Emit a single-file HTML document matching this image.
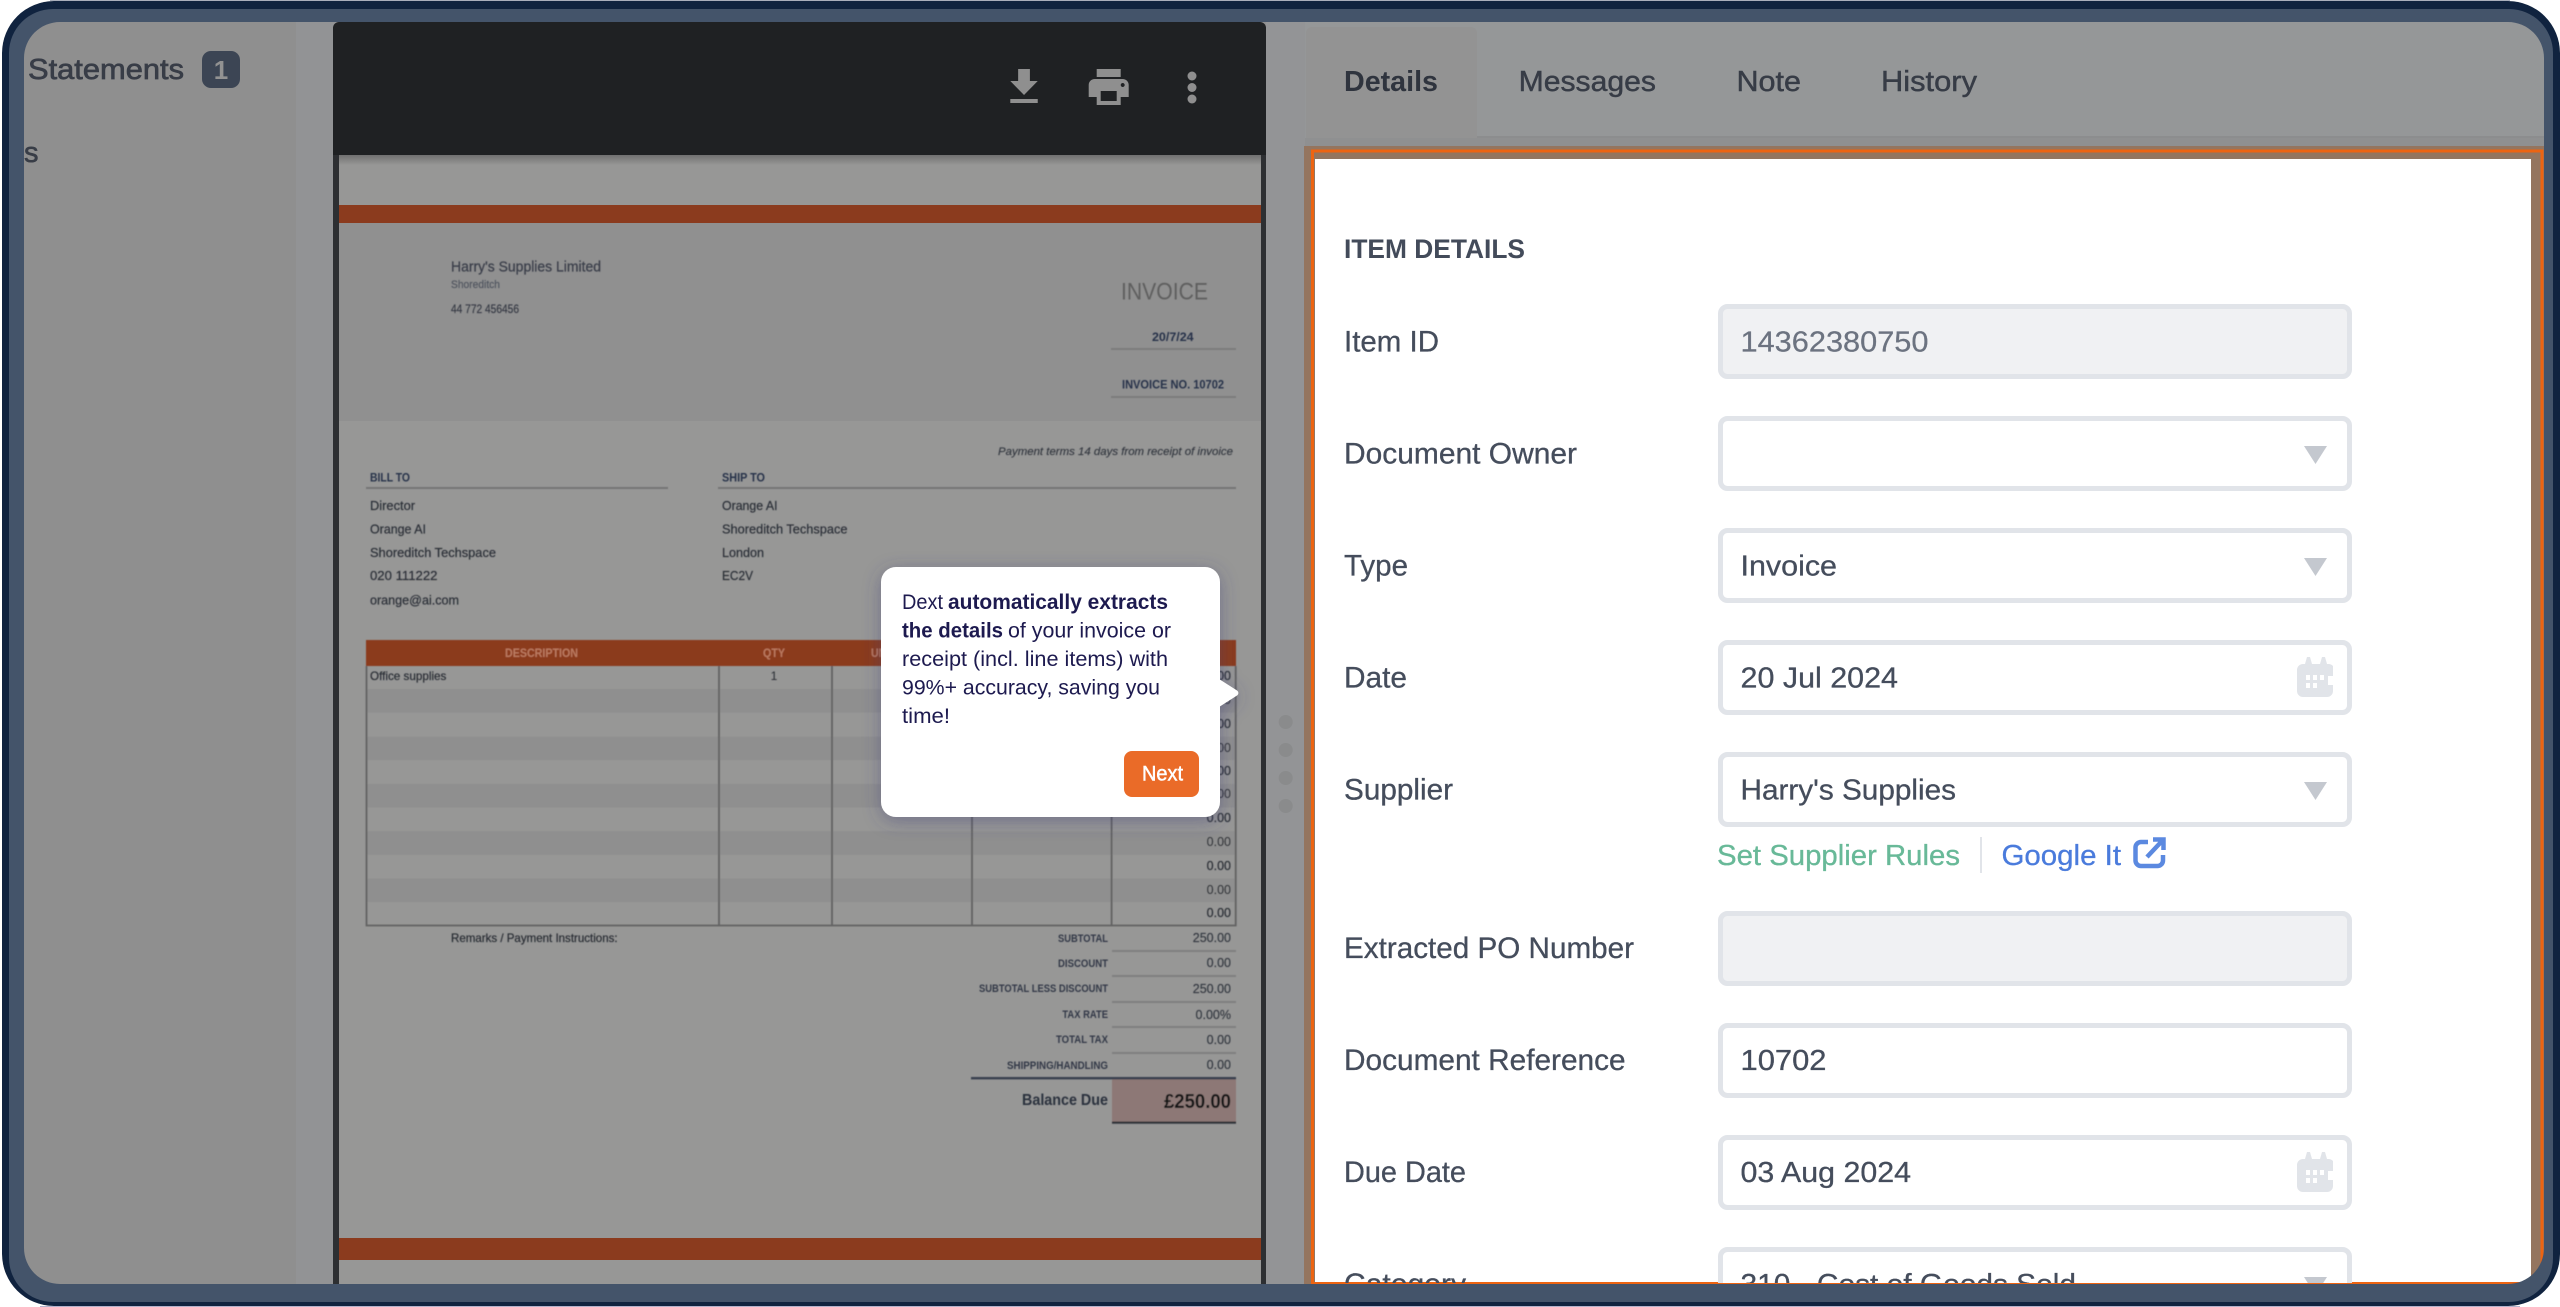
<!DOCTYPE html>
<html lang="en"><head><meta charset="utf-8"><title>Dext item details</title>
<style>
html,body{margin:0;padding:0;background:#fff;width:2560px;height:1307px;overflow:hidden}
svg{display:block}
text{font-family:"Liberation Sans",Arial,sans-serif;white-space:pre}
</style></head><body>
<svg xmlns="http://www.w3.org/2000/svg" width="2560" height="1307" viewBox="0 0 2560 1307">
<defs>
<filter id="b" x="-2%" y="-2%" width="104%" height="104%"><feGaussianBlur stdDeviation="0.4"/></filter>
<filter id="s" x="-15%" y="-15%" width="130%" height="130%"><feDropShadow dx="0" dy="4" stdDeviation="9" flood-color="#3f3f78" flood-opacity=".45"/></filter>
<linearGradient id="tg" x1="0" y1="0" x2="0" y2="1"><stop offset="0" stop-color="#707070"/><stop offset="1" stop-color="#979796"/></linearGradient>
<clipPath id="fc"><rect x="1315" y="159" width="1216" height="1124"/></clipPath>
</defs>

<!-- base panels -->
<rect width="2560" height="1307" fill="#8f8f8f"/>
<rect x="296" y="0" width="40" height="1307" fill="#929395"/>
<rect x="1266" y="0" width="1294" height="1307" fill="#939496"/>
<rect x="1305" y="0" width="1255" height="138" fill="#959798"/>
<rect x="1305" y="138" width="1255" height="8" fill="#8f9091"/>
<path d="M1306 138V33a6 6 0 0 1 6-6H1471a6 6 0 0 1 6 6V138Z" fill="#939393"/>
<rect x="1477" y="136" width="1080" height="2" fill="#8c8d8e"/>

<!-- left nav -->
<text x="28" y="79" font-size="28.5" fill="#383d47" stroke="#383d47" stroke-width=".7" textLength="156" lengthAdjust="spacingAndGlyphs">Statements</text>
<rect x="202" y="51" width="38" height="37" rx="9" fill="#3c4554"/>
<text x="221" y="79" font-size="26" font-weight="700" fill="#929292" text-anchor="middle">1</text>
<text x="24" y="162" font-size="29" fill="#383d47" stroke="#383d47" stroke-width=".6">s</text>

<!-- doc viewer -->
<rect x="333" y="150" width="933" height="1140" fill="#2d2f32"/>
<rect x="339" y="155" width="922" height="1135" fill="#979796"/>
<rect x="339" y="155" width="922" height="10" fill="url(#tg)"/>
<rect x="339" y="223" width="922" height="198" fill="#909090"/>
<rect x="339" y="205" width="922" height="18" fill="#8b3b1e"/>
<rect x="339" y="1238" width="922" height="22" fill="#8b3b1e"/>
<path d="M333 155V28a6 6 0 0 1 6-6H1260a6 6 0 0 1 6 6V155Z" fill="#1f2123"/>

<!-- toolbar icons -->
<g fill="#8f8f8f">
<path transform="translate(1000.5 63) scale(1.96 2)" d="M19 9h-4V3H9v6H5l7 7 7-7zM5 18v2h14v-2H5z"/>
<path transform="translate(1084.7 63) scale(2)" d="M19 8H5c-1.66 0-3 1.34-3 3v6h4v4h12v-4h4v-6c0-1.66-1.34-3-3-3zm-3 11H8v-5h8v5zm3-7c-.55 0-1-.45-1-1s.45-1 1-1 1 .45 1 1-.45 1-1 1zm-1-9H6v4h12V3z"/>
<ellipse cx="1192" cy="76" rx="4.5" ry="4.5"/><ellipse cx="1192" cy="87.5" rx="4.5" ry="4.5"/><ellipse cx="1192" cy="99" rx="4.5" ry="4.5"/>
</g>

<!-- invoice content -->
<g filter="url(#b)">
<rect x="367" y="689" width="869" height="23.6" fill="#8f8f8f"/>
<rect x="367" y="736.6" width="869" height="23.6" fill="#8f8f8f"/>
<rect x="367" y="783.9" width="869" height="23.6" fill="#8f8f8f"/>
<rect x="367" y="831.2" width="869" height="23.6" fill="#8f8f8f"/>
<rect x="367" y="878.5" width="869" height="23.6" fill="#8f8f8f"/>

<text x="451" y="271.5" font-size="14.5" fill="#3a3e49" stroke="#3a3e49" stroke-width=".25" textLength="150" lengthAdjust="spacingAndGlyphs">Harry's Supplies Limited</text>
<text x="451" y="288" font-size="11" fill="#50555f" stroke="#50555f" stroke-width=".2" textLength="49" lengthAdjust="spacingAndGlyphs">Shoreditch</text>
<text x="451" y="313" font-size="11.5" fill="#363a44" stroke="#363a44" stroke-width=".2" textLength="68" lengthAdjust="spacingAndGlyphs">44 772 456456</text>
<text x="1121" y="299.5" font-size="24" fill="#5f5f5f" textLength="87" lengthAdjust="spacingAndGlyphs">INVOICE</text>
<text x="1152" y="341" font-size="12" font-weight="700" fill="#26324a" textLength="41.6" lengthAdjust="spacingAndGlyphs">20/7/24</text>
<rect x="1111" y="348" width="125" height="2" fill="#7b7b7b"/>
<text x="1122" y="388.5" font-size="12" font-weight="700" fill="#26324a" textLength="102" lengthAdjust="spacingAndGlyphs">INVOICE NO. 10702</text>
<rect x="1111" y="396" width="125" height="2" fill="#7b7b7b"/>
<text x="998" y="455" font-size="11" font-style="italic" fill="#33373f" stroke="#33373f" stroke-width=".15" textLength="235" lengthAdjust="spacingAndGlyphs">Payment terms 14 days from receipt of invoice</text>

<text x="370" y="481.5" font-size="11.5" font-weight="700" fill="#26324a" textLength="40" lengthAdjust="spacingAndGlyphs">BILL TO</text>
<rect x="366" y="487" width="302" height="2" fill="#757575"/>
<text x="722" y="481.5" font-size="11.5" font-weight="700" fill="#26324a" textLength="43" lengthAdjust="spacingAndGlyphs">SHIP TO</text>
<rect x="718" y="487" width="518" height="2" fill="#757575"/>
<g font-size="13" fill="#2b2f37" stroke="#2b2f37" stroke-width=".2">
<text x="370" y="510" textLength="45" lengthAdjust="spacingAndGlyphs">Director</text>
<text x="370" y="533.5" textLength="56" lengthAdjust="spacingAndGlyphs">Orange AI</text>
<text x="370" y="557" textLength="126" lengthAdjust="spacingAndGlyphs">Shoreditch Techspace</text>
<text x="370" y="580" textLength="67.5" lengthAdjust="spacingAndGlyphs">020 111222</text>
<text x="370" y="604.5" textLength="89" lengthAdjust="spacingAndGlyphs">orange@ai.com</text>
<text x="722" y="510" textLength="55.5" lengthAdjust="spacingAndGlyphs">Orange AI</text>
<text x="722" y="533.5" textLength="125.5" lengthAdjust="spacingAndGlyphs">Shoreditch Techspace</text>
<text x="722" y="557" textLength="42" lengthAdjust="spacingAndGlyphs">London</text>
<text x="722" y="580" textLength="31" lengthAdjust="spacingAndGlyphs">EC2V</text>
</g>

<rect x="366" y="640" width="870" height="26" fill="#8b3b1e"/>
<g font-size="11.5" font-weight="700" fill="#bb7a60">
<text x="505" y="657" textLength="73" lengthAdjust="spacingAndGlyphs">DESCRIPTION</text>
<text x="763" y="657" textLength="22" lengthAdjust="spacingAndGlyphs">QTY</text>
<text x="871" y="657" textLength="60" lengthAdjust="spacingAndGlyphs">UNIT PRICE</text>
</g>
<g stroke="#626262" stroke-width="1.8" fill="none">
<path d="M366.5 666V925.5H1235.7V666M719 666V925M832 666V925M972 666V925M1111.6 666V925"/>
</g>
<text x="370" y="680" font-size="12" fill="#282c33" stroke="#282c33" stroke-width=".2" textLength="76.4" lengthAdjust="spacingAndGlyphs">Office supplies</text>
<text x="774" y="680" font-size="12" fill="#282c33" text-anchor="middle">1</text>
<g font-size="12.5" fill="#282c33" stroke="#282c33" stroke-width=".15" text-anchor="end">
<text x="1231" y="680">250.00</text>
<text x="1231" y="704">0.00</text><text x="1231" y="728">0.00</text><text x="1231" y="752">0.00</text>
<text x="1231" y="775">0.00</text><text x="1231" y="798">0.00</text><text x="1231" y="822">0.00</text>
<text x="1231" y="846">0.00</text><text x="1231" y="870">0.00</text><text x="1231" y="894">0.00</text><text x="1231" y="917">0.00</text>
</g>

<text x="451" y="942" font-size="12" fill="#282c33" stroke="#282c33" stroke-width=".2" textLength="166.6" lengthAdjust="spacingAndGlyphs">Remarks / Payment Instructions:</text>
<g font-size="11" font-weight="700" fill="#333947">
<text x="1058" y="942" textLength="50" lengthAdjust="spacingAndGlyphs">SUBTOTAL</text>
<text x="1058" y="967" textLength="50" lengthAdjust="spacingAndGlyphs">DISCOUNT</text>
<text x="979" y="992" textLength="129" lengthAdjust="spacingAndGlyphs">SUBTOTAL LESS DISCOUNT</text>
<text x="1062.4" y="1018" textLength="45.6" lengthAdjust="spacingAndGlyphs">TAX RATE</text>
<text x="1056" y="1043" textLength="52" lengthAdjust="spacingAndGlyphs">TOTAL TAX</text>
<text x="1007" y="1069" textLength="101" lengthAdjust="spacingAndGlyphs">SHIPPING/HANDLING</text>
</g>
<g font-size="12.5" fill="#33373f" stroke="#33373f" stroke-width=".15" text-anchor="end">
<text x="1231" y="942">250.00</text><text x="1231" y="967">0.00</text><text x="1231" y="993">250.00</text>
<text x="1231" y="1019">0.00%</text><text x="1231" y="1044">0.00</text><text x="1231" y="1069">0.00</text>
</g>
<g fill="#7f7f7f">
<rect x="1112" y="950" width="124" height="2"/><rect x="1112" y="975" width="124" height="2"/>
<rect x="1112" y="1001" width="124" height="2"/><rect x="1112" y="1026" width="124" height="2"/><rect x="1112" y="1052" width="124" height="2"/>
</g>
<rect x="1112" y="1078" width="124" height="44" fill="#8d7876"/>
<rect x="971" y="1077" width="265" height="2.4" fill="#39414f"/>
<rect x="1112" y="1121.5" width="124" height="2.2" fill="#2f3138"/>
<text x="1022" y="1105" font-size="15.5" font-weight="700" fill="#2b313d" textLength="86" lengthAdjust="spacingAndGlyphs">Balance Due</text>
<text x="1164" y="1108" font-size="20.5" font-weight="700" fill="#141619" textLength="67" lengthAdjust="spacingAndGlyphs">£250.00</text>
</g>

<!-- splitter dots -->
<g fill="#8a8b8c"><circle cx="1285.7" cy="722" r="7"/><circle cx="1285.7" cy="750" r="7"/><circle cx="1285.7" cy="778" r="7"/><circle cx="1285.7" cy="806" r="7"/></g>

<!-- tabs -->
<text x="1344" y="91" font-size="29" font-weight="700" fill="#2f343e" textLength="94" lengthAdjust="spacingAndGlyphs">Details</text>
<g font-size="29" fill="#373c46" stroke="#373c46" stroke-width=".45">
<text x="1518.6" y="91" textLength="137.4" lengthAdjust="spacingAndGlyphs">Messages</text>
<text x="1736.5" y="91" textLength="64.5" lengthAdjust="spacingAndGlyphs">Note</text>
<text x="1881" y="91" textLength="96" lengthAdjust="spacingAndGlyphs">History</text>
</g>

<!-- highlighted details panel -->
<rect x="1304" y="146" width="1240" height="1138" fill="#94755f"/>
<rect x="1315" y="159" width="1216" height="1124" fill="#fff"/>
<rect x="1312.5" y="151" width="1229.5" height="1132.5" fill="none" stroke="#ed6412" stroke-width="3"/>

<g clip-path="url(#fc)">
<text x="1344" y="258.2" font-size="26.5" font-weight="700" fill="#434b5a" textLength="181" lengthAdjust="spacingAndGlyphs">ITEM DETAILS</text>
<g font-size="29.5" fill="#454d5c" stroke="#454d5c" stroke-width=".3">
<text x="1344" y="351.5" textLength="95" lengthAdjust="spacingAndGlyphs">Item ID</text>
<text x="1344" y="463.5" textLength="233" lengthAdjust="spacingAndGlyphs">Document Owner</text>
<text x="1344" y="575.5" textLength="64" lengthAdjust="spacingAndGlyphs">Type</text>
<text x="1344" y="687.5" textLength="63" lengthAdjust="spacingAndGlyphs">Date</text>
<text x="1344" y="799.5" textLength="109" lengthAdjust="spacingAndGlyphs">Supplier</text>
<text x="1344" y="958" textLength="290" lengthAdjust="spacingAndGlyphs">Extracted PO Number</text>
<text x="1344" y="1070" textLength="281.6" lengthAdjust="spacingAndGlyphs">Document Reference</text>
<text x="1344" y="1182" textLength="122" lengthAdjust="spacingAndGlyphs">Due Date</text>
<text x="1344" y="1294" textLength="122" lengthAdjust="spacingAndGlyphs">Category</text>
</g>
<g fill="#fff" stroke="#e1e4e9" stroke-width="5">
<rect x="1720.5" y="306.5" width="629" height="70" rx="7" fill="#f0f1f3"/>
<rect x="1720.5" y="418.5" width="629" height="70" rx="7"/>
<rect x="1720.5" y="530.5" width="629" height="70" rx="7"/>
<rect x="1720.5" y="642.5" width="629" height="70" rx="7"/>
<rect x="1720.5" y="754.5" width="629" height="70" rx="7"/>
<rect x="1720.5" y="913.5" width="629" height="70" rx="7" fill="#f0f1f3"/>
<rect x="1720.5" y="1025.5" width="629" height="70" rx="7"/>
<rect x="1720.5" y="1137.5" width="629" height="70" rx="7"/>
<rect x="1720.5" y="1249.5" width="629" height="70" rx="7"/>
</g>
<text x="1740.5" y="351.5" font-size="29" fill="#6c7380" stroke="#6c7380" stroke-width=".25" textLength="188" lengthAdjust="spacingAndGlyphs">14362380750</text>
<g font-size="29" fill="#454d5c" stroke="#454d5c" stroke-width=".3">
<text x="1740.5" y="575.5" textLength="96.5" lengthAdjust="spacingAndGlyphs">Invoice</text>
<text x="1740.5" y="687.5" textLength="157.5" lengthAdjust="spacingAndGlyphs">20 Jul 2024</text>
<text x="1740.5" y="799.5" textLength="215.5" lengthAdjust="spacingAndGlyphs">Harry's Supplies</text>
<text x="1740.5" y="1070" textLength="86" lengthAdjust="spacingAndGlyphs">10702</text>
<text x="1740.5" y="1182" textLength="170.5" lengthAdjust="spacingAndGlyphs">03 Aug 2024</text>
<text x="1740.5" y="1294" textLength="335.5" lengthAdjust="spacingAndGlyphs">310 - Cost of Goods Sold</text>
</g>
<g fill="#c4c8cf">
<path d="M2304 446H2327L2315.500 464Z"/><path d="M2304 558H2327L2315.500 576Z"/><path d="M2304 782H2327L2315.500 800Z"/><path d="M2304 1277H2327L2315.500 1295Z"/>
</g>
<!-- calendars -->
<g>
<path d="M2297 670a6 6 0 0 1 6-6h2l2-7h3l2 7h8l2-7h3l2 7h2a6 6 0 0 1 4 2V676h-5v9h5v6a6 6 0 0 1-6 6H2303a6 6 0 0 1-6-6Z" fill="#e1e4e9"/>
<g fill="#fff"><rect x="2306" y="675" width="4" height="5"/><rect x="2313" y="675" width="4" height="5"/><rect x="2320" y="675" width="4" height="5"/><rect x="2306" y="683" width="4" height="5"/><rect x="2313" y="683" width="4" height="5"/></g>
</g>
<g transform="translate(0 495)">
<path d="M2297 670a6 6 0 0 1 6-6h2l2-7h3l2 7h8l2-7h3l2 7h2a6 6 0 0 1 4 2V676h-5v9h5v6a6 6 0 0 1-6 6H2303a6 6 0 0 1-6-6Z" fill="#e1e4e9"/>
<g fill="#fff"><rect x="2306" y="675" width="4" height="5"/><rect x="2313" y="675" width="4" height="5"/><rect x="2320" y="675" width="4" height="5"/><rect x="2306" y="683" width="4" height="5"/><rect x="2313" y="683" width="4" height="5"/></g>
</g>
<!-- links -->
<text x="1717" y="865" font-size="29" fill="#68b998" stroke="#68b998" stroke-width=".3" textLength="243" lengthAdjust="spacingAndGlyphs">Set Supplier Rules</text>
<rect x="1980" y="837" width="2" height="36" fill="#e1e4e9"/>
<text x="2001.500" y="865" font-size="29" fill="#4a7bdc" stroke="#4a7bdc" stroke-width=".3" textLength="119.500" lengthAdjust="spacingAndGlyphs">Google It</text>
<g fill="none" stroke="#5b89e0" stroke-width="4.500">
<path d="M2148 842H2141a5.500 5.500 0 0 0-5.500 5.500V860.500a5.500 5.500 0 0 0 5.500 5.500H2157.500a5.500 5.500 0 0 0 5.500-5.500V855"/>
<path d="M2147 857L2162 841M2153 839.500H2163.500V850"/>
</g>
</g>

<!-- tooltip -->
<g filter="url(#s)">
<rect x="881" y="567" width="339" height="250" rx="15" fill="#fff"/>
<path d="M1219 679L1237 690.500a3 3 0 0 1 0 5L1219 707Z" fill="#fff"/>
</g>
<g font-size="21" fill="#1d1a4f">
<text x="902" y="609" textLength="41" lengthAdjust="spacingAndGlyphs">Dext</text>
<text x="948" y="609" font-weight="700" textLength="220" lengthAdjust="spacingAndGlyphs">automatically extracts</text>
<text x="902" y="637.500" font-weight="700" textLength="101" lengthAdjust="spacingAndGlyphs">the details</text>
<text x="1008" y="637.500" textLength="163" lengthAdjust="spacingAndGlyphs">of your invoice or</text>
<text x="902" y="666" textLength="266" lengthAdjust="spacingAndGlyphs">receipt (incl. line items) with</text>
<text x="902" y="694.500" textLength="258" lengthAdjust="spacingAndGlyphs">99%+ accuracy, saving you</text>
<text x="902" y="723" textLength="48" lengthAdjust="spacingAndGlyphs">time!</text>
</g>
<rect x="1124" y="751" width="75" height="46" rx="8" fill="#ea6b28"/>
<text x="1142" y="780.500" font-size="21.500" fill="#fff" stroke="#fff" stroke-width=".5" textLength="41" lengthAdjust="spacingAndGlyphs">Next</text>

<!-- device frame -->
<path fill-rule="evenodd" fill="#44546a" d="M9 9H2553V1302H9ZM60 22H2508A36 36 0 0 1 2544 58V1248A36 36 0 0 1 2508 1284H60A36 36 0 0 1 24 1248V58A36 36 0 0 1 60 22Z"/>
<path fill-rule="evenodd" fill="#10233f" d="M54 1H2508A52 52 0 0 1 2560 53V1254A52 52 0 0 1 2508 1306H54A52 52 0 0 1 2 1254V53A52 52 0 0 1 54 1ZM53 9A44 44 0 0 0 9 53V1258A44 44 0 0 0 53 1302H2509A44 44 0 0 0 2553 1258V53A44 44 0 0 0 2509 9Z"/>
<path fill-rule="evenodd" fill="#fff" d="M0 0H2560V1307H0ZM54 1A52 52 0 0 0 2 53V1254A52 52 0 0 0 54 1306H2508A52 52 0 0 0 2560 1254V53A52 52 0 0 0 2508 1Z"/>
<rect x="40" y="1306" width="2480" height="1" fill="#b3b2cc"/>
<rect x="50" y="0" width="2460" height="1" fill="#a9aebb"/>
</svg>
</body></html>
